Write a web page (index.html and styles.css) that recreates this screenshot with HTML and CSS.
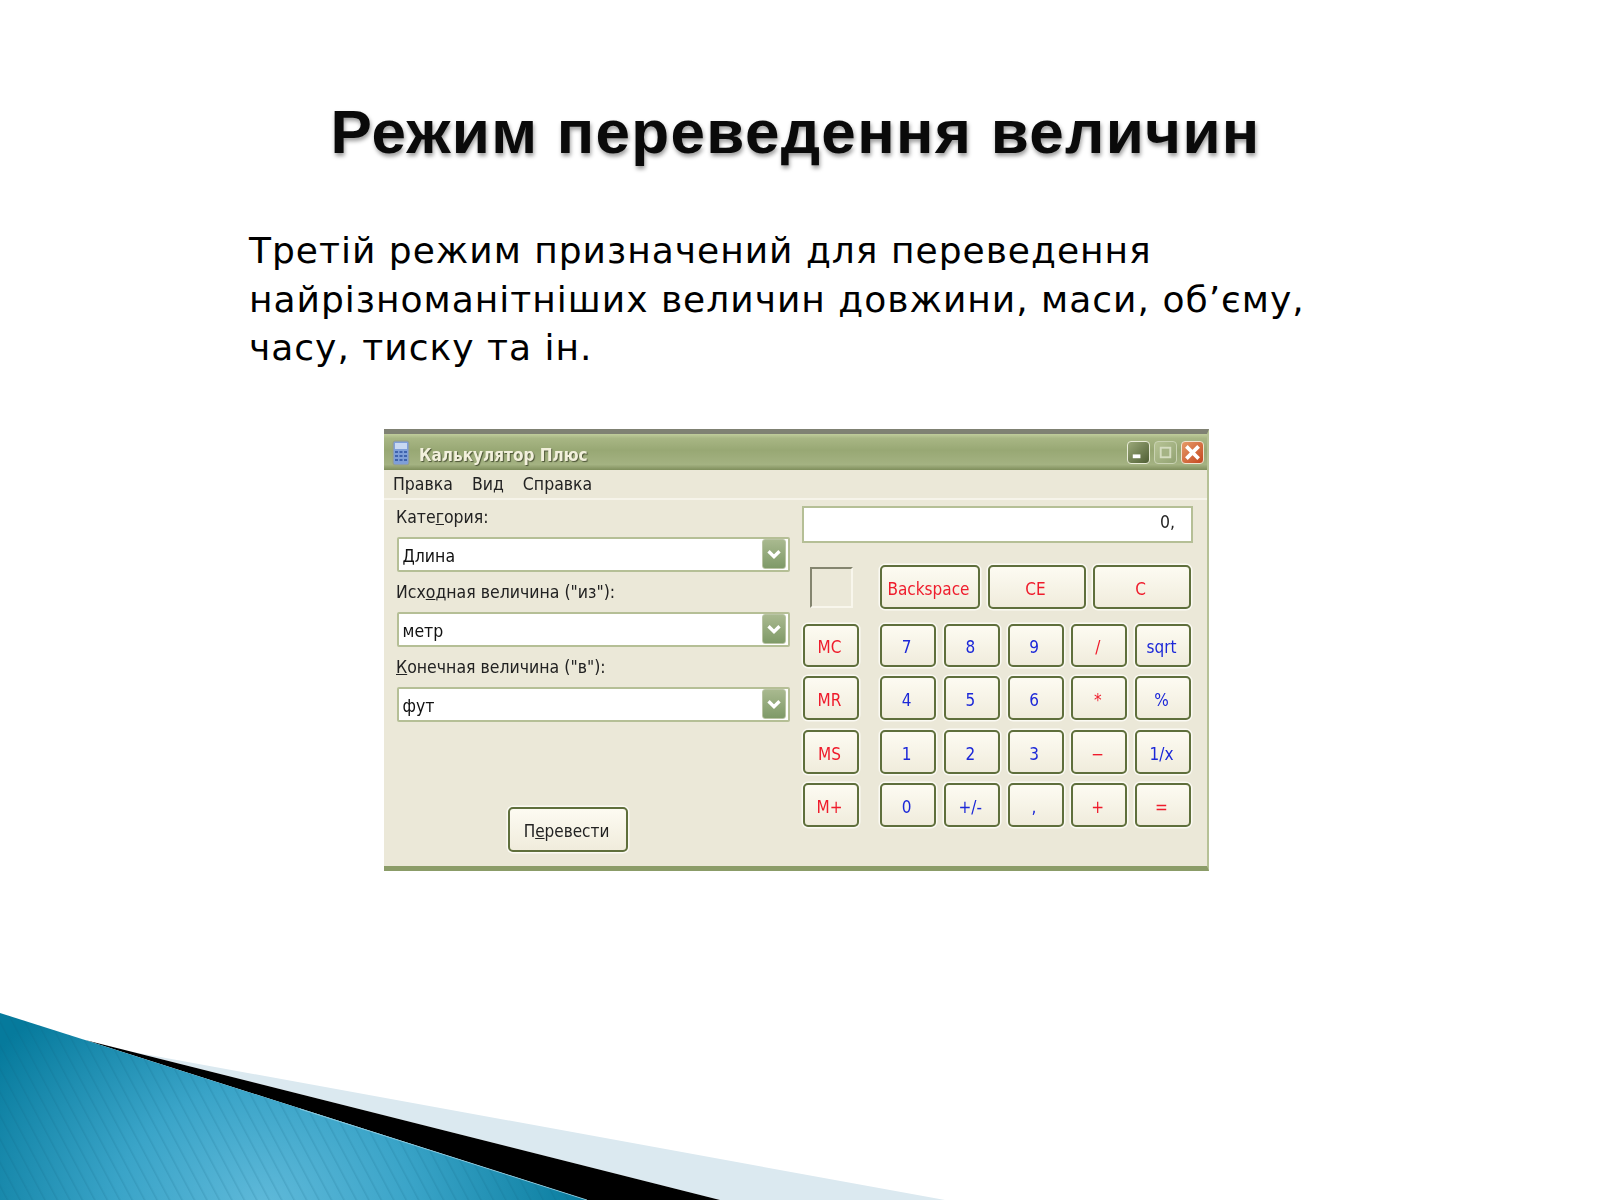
FILE: index.html
```html
<!DOCTYPE html>
<html lang="uk">
<head>
<meta charset="utf-8">
<title>Режим переведення величин</title>
<link rel="stylesheet" href="styles.css">
</head>
<body>
<main class="slide">
  <h1 class="slide-title">Режим переведення величин</h1>
  <p class="slide-text">Третій режим призначений для переведення найрізноманітніших величин довжини, маси, об’єму, часу, тиску та ін.</p>
  <section class="window">
    <header class="titlebar">
      <svg class="app-icon" viewBox="0 0 18 26"><rect x="1" y="1" width="16" height="24" rx="2" fill="#7f9fd8" stroke="#9a9f80"/><rect x="3" y="3" width="12" height="6" fill="#c9d9f2"/><g fill="#3f63ad"><rect x="3" y="11" width="3" height="2"/><rect x="7.5" y="11" width="3" height="2"/><rect x="12" y="11" width="3" height="2"/><rect x="3" y="15" width="3" height="2"/><rect x="7.5" y="15" width="3" height="2"/><rect x="12" y="15" width="3" height="2"/><rect x="3" y="19" width="3" height="2"/><rect x="7.5" y="19" width="3" height="2"/><rect x="12" y="19" width="3" height="2"/></g></svg>
      <span class="title-text">Калькулятор Плюс</span>
      <div class="win-buttons">
        <span class="win-btn win-min"><svg viewBox="0 0 22 22"><rect x="5" y="13" width="8" height="4" fill="#fff"/></svg></span>
        <span class="win-btn win-max"><svg viewBox="0 0 22 22"><rect x="6" y="6" width="10" height="10" fill="#a5b385" stroke="#d5dcc0" stroke-width="2"/></svg></span>
        <span class="win-btn win-close"><svg viewBox="0 0 22 22"><path d="M6 6 16 16M16 6 6 16" stroke="#fff" stroke-width="4" stroke-linecap="square"/></svg></span>
      </div>
    </header>
    <nav class="menubar"><span>Правка</span><span>Вид</span><span>Справка</span></nav>
    <div class="win-body">
      <div class="converter">
        <label class="field-label">Кате<u>г</u>ория:</label>
        <div class="combo"><span class="combo-value">Длина</span><span class="combo-btn"><svg viewBox="0 0 24 30"><path d="M6 12 12 18 18 12" fill="none" stroke="#fff" stroke-width="3.6"/></svg></span></div>
        <label class="field-label">Исх<u>о</u>дная величина ("из"):</label>
        <div class="combo"><span class="combo-value">метр</span><span class="combo-btn"><svg viewBox="0 0 24 30"><path d="M6 12 12 18 18 12" fill="none" stroke="#fff" stroke-width="3.6"/></svg></span></div>
        <label class="field-label"><u>К</u>онечная величина ("в"):</label>
        <div class="combo"><span class="combo-value">фут</span><span class="combo-btn"><svg viewBox="0 0 24 30"><path d="M6 12 12 18 18 12" fill="none" stroke="#fff" stroke-width="3.6"/></svg></span></div>
        <button class="key convert">П<u>е</u>ревести</button>
      </div>
      <div class="calc">
        <output class="display">0,</output>
        <div class="top-row">
          <span class="mem-box"></span>
          <button class="key red">Backspace</button>
          <button class="key red">CE</button>
          <button class="key red">C</button>
        </div>
        <div class="keys">
          <div class="mem-keys">
            <button class="key red">MC</button>
            <button class="key red">MR</button>
            <button class="key red">MS</button>
            <button class="key red">M+</button>
          </div>
          <div class="num-keys">
            <button class="key blue">7</button><button class="key blue">8</button><button class="key blue">9</button><button class="key red">/</button><button class="key blue">sqrt</button>
            <button class="key blue">4</button><button class="key blue">5</button><button class="key blue">6</button><button class="key red">*</button><button class="key blue">%</button>
            <button class="key blue">1</button><button class="key blue">2</button><button class="key blue">3</button><button class="key red">−</button><button class="key blue">1/x</button>
            <button class="key blue">0</button><button class="key blue">+/-</button><button class="key blue">,</button><button class="key red">+</button><button class="key red">=</button>
          </div>
        </div>
      </div>
    </div>
  </section>
</main>
<svg class="corner-art" viewBox="0 0 1000 200" aria-hidden="true">
  <defs>
    <radialGradient id="teal" gradientUnits="userSpaceOnUse" cx="265" cy="205" r="330" gradientTransform="translate(265 205) scale(1 .8) translate(-265 -205)">
      <stop offset="0" stop-color="#5fb9d9"/>
      <stop offset=".45" stop-color="#3aa4c8"/>
      <stop offset="1" stop-color="#067a9c"/>
    </radialGradient>
    <pattern id="stripes" width="11" height="11" patternUnits="userSpaceOnUse" patternTransform="rotate(-28)">
      <rect x="0" width="1.6" height="11" fill="#0a5f80" fill-opacity=".16"/>
    </pattern>
  </defs>
  <polygon points="133,52 945,200 720,200 85,40" fill="#dbe9f0"/>
  <polygon points="85,40 720,200 587,200" fill="#000"/>
  <polygon points="0,13 85,40 587,200 0,200" fill="url(#teal)"/>
  <polygon points="0,13 85,40 587,200 0,200" fill="url(#stripes)"/>
  <polyline points="300,109 587,200" fill="none" stroke="#9fd6e8" stroke-width="1" stroke-opacity=".7"/>
</svg>
</body>
</html>
```
FILE: styles.css
```css
* { box-sizing: border-box; }
html, body { margin: 0; height: 100%; background: #fff; }
body { position: relative; width: 1600px; height: 1200px; overflow: hidden; }

.slide { padding-top: 91px; }

.slide-title {
  margin: 0;
  text-align: center;
  font: bold 62px/82px "Liberation Sans", Arial, sans-serif;
  letter-spacing: 1.3px;
  color: #0a0a0a;
  text-shadow: 1px 3px 4px rgba(0, 0, 0, .4);
  padding-right: 9px;
}
.slide-text {
  margin: 54px 0 0 249px;
  width: 1090px;
  font: 36px/48.5px "DejaVu Sans", Verdana, sans-serif;
  letter-spacing: 1px;
  color: #000;
}

.window {
  width: 825px;
  height: 442px;
  margin: 56px 0 0 384px;
  display: flex;
  flex-direction: column;
  background: #ebe8d8;
  border-top: 5px solid #7f8173;
  border-bottom: 5px solid #8b9c68;
  border-right: 2px solid #b6c196;
  font-family: "DejaVu Sans", Tahoma, sans-serif;
  font-stretch: condensed;
  font-size: 17.5px;
  color: #222;
  filter: blur(.35px);
}
.titlebar {
  height: 36px;
  display: flex;
  align-items: center;
  padding: 0 3px 0 8px;
  background: linear-gradient(#c0cc9c 0, #a8b684 12%, #98a874 45%, #a4b282 85%, #7f8e5c 100%);
}
.app-icon { width: 18px; height: 26px; margin-top: 3px; }
.title-text {
  margin: 6px 0 0 9px;
  font-weight: bold;
  font-size: 17px;
  color: #f2f0dc;
  text-shadow: 1px 1px 1px #4c5436;
}
.win-buttons { margin: 2px 0 0 auto; display: flex; gap: 4px; }
.win-btn {
  width: 23px;
  height: 23px;
  border: 1.5px solid #e9ecd8;
  border-radius: 4px;
  display: block;
}
.win-btn svg { display: block; width: 100%; height: 100%; }
.win-min { background: linear-gradient(135deg, #9aa878, #4f5e34); }
.win-max { background: linear-gradient(135deg, #b6c394, #93a373); border-color: #c9d2b2; }
.win-close { background: linear-gradient(135deg, #e69a68, #c4471f); border-color: #efe3d0; }

.menubar {
  height: 30px;
  display: flex;
  gap: 19px;
  align-items: center;
  padding: 1px 0 0 9px;
  border-bottom: 2px solid #f6f4ea;
}

.win-body { flex: 1; display: flex; }
.converter { width: 418px; padding: 7px 0 0 12px; display: flex; flex-direction: column; }
.field-label { height: 30px; line-height: 21px; }
.combo {
  width: 393px;
  height: 35px;
  margin: 0 0 10px 1px;
  display: flex;
  align-items: center;
  justify-content: space-between;
  padding: 0 2px 0 3.5px;
  background: #fff;
  border: 2px solid #b5bf96;
  border-radius: 2px;
  color: #111;
}
.combo-value { padding-top: 3px; }
.combo-btn {
  width: 24px;
  height: 30px;
  background: linear-gradient(#a9b98f, #7f9a68);
  border: 1px solid #b9c4a4;
  border-radius: 3px;
}
.combo-btn svg { display: block; width: 100%; height: 100%; }

.key {
  font: inherit;
  font-size: 17px;
  padding: 4px 3px 0 0;
  background: linear-gradient(#fdfbf2, #f0ecdc);
  border: 2.5px solid #5f6f3c;
  border-radius: 5px;
  box-shadow: 0 0 0 1.5px #fbfaf3;
  color: #222;
}
.key.red { color: #ef1c2c; }
.key.blue { color: #1c28d8; }
.convert { align-self: flex-start; width: 120px; height: 45px; margin: 75px 0 0 112px; }

.calc { flex: 1; padding: 6px 0 0 0; }
.display {
  display: block;
  width: 391px;
  height: 37px;
  background: #fff;
  border: 2px solid #b5bf96;
  text-align: right;
  line-height: 28px;
  padding-right: 16px;
  color: #222;
}
.top-row { display: flex; margin-top: 22px; align-items: center; }
.mem-box {
  width: 43px;
  height: 41px;
  margin: 2px 27px 0 8px;
  border: 2px solid #f8f6ec;
  border-top-color: #84856f;
  border-left-color: #84856f;
}
.top-row .key { height: 44px; }
.top-row .key:nth-child(2) { width: 100px; margin-right: 8px; }
.top-row .key:nth-child(3) { width: 98px; margin-right: 7px; }
.top-row .key:nth-child(4) { width: 98px; }

.keys { display: flex; margin-top: 15px; }
.mem-keys {
  width: 56px;
  margin-right: 21px;
  display: grid;
  grid-template-rows: 43px 44px 44px 44px;
  row-gap: 9.67px;
  margin-left: 1px;
}
.num-keys {
  display: grid;
  grid-template-columns: repeat(5, 56px);
  grid-template-rows: 43px 44px 44px 44px;
  column-gap: 7.75px;
  row-gap: 9.67px;
}

.corner-art {
  position: absolute;
  left: 0;
  bottom: 0;
  width: 1000px;
  height: 200px;
  display: block;
}
```
